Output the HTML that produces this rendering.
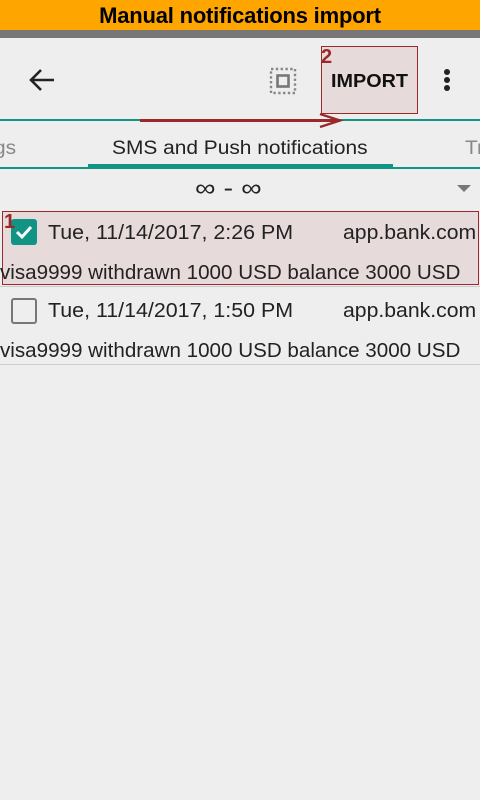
<!DOCTYPE html>
<html><head><style>
body{margin:0;width:480px;height:800px;background:#eeeeee;font-family:"Liberation Sans",sans-serif;position:relative;overflow:hidden;color:#222}
.a{position:absolute;white-space:nowrap;transform-origin:0 0}
</style></head><body>
<div class="a" style="left:0;top:0;width:480px;height:30px;background:#ffa500;text-align:center;font-weight:bold;font-size:22px;line-height:31px;color:#000;letter-spacing:-0.2px">Manual notifications import</div>
<div class="a" style="left:0;top:30px;width:480px;height:8px;background:#777"></div>
<svg class="a" style="left:28px;top:67px" width="28" height="26" viewBox="0 0 28 26"><path d="M26 13H3M13 3L3 13l10 10" stroke="#222" stroke-width="2.6" fill="none"/></svg>
<svg class="a" style="left:269px;top:67px" width="28" height="28" viewBox="0 0 28 28"><rect x="2" y="2" width="24" height="24" fill="none" stroke="#888" stroke-width="2.4" stroke-dasharray="2.4 2.4"/><rect x="8.5" y="8.5" width="11" height="11" fill="none" stroke="#777" stroke-width="2.6"/></svg>
<div class="a" style="left:321px;top:46px;width:97px;height:68px;background:#e6dada;border:1px solid #9a2a2a;box-sizing:border-box"></div>
<div class="a" style="left:321px;top:46px;font-weight:bold;font-size:20px;color:#9a2a2a">2</div>
<div class="a" style="left:331px;top:71px;font-size:18px;font-weight:bold;color:#111;transform:scaleX(1.1)">IMPORT</div>
<div class="a" style="left:444px;top:69px;width:6px;height:6px;border-radius:3px;background:#222;box-shadow:0 8px 0 #222,0 16px 0 #222"></div>
<div class="a" style="left:0;top:119px;width:480px;height:2px;background:#129484"></div>
<div class="a" style="left:140px;top:119px;width:200px;height:3px;background:#9a2a2a"></div>
<svg class="a" style="left:318px;top:112px" width="26" height="18"><path d="M2 2L22 8.5L2 15" fill="none" stroke="#9a2a2a" stroke-width="2.4"/></svg>
<div class="a" style="left:-6px;top:138px;font-size:19px;color:#888;transform:scaleX(1.1)">gs</div>
<div class="a" style="left:112px;top:138px;font-size:19px;color:#222;transform:scaleX(1.1)">SMS and Push notifications</div>
<div class="a" style="left:465px;top:138px;font-size:19px;color:#888;transform:scaleX(1.1)">Tr</div>
<div class="a" style="left:88px;top:164px;width:305px;height:4px;background:#129484"></div>
<div class="a" style="left:0;top:167px;width:480px;height:2px;background:#129484"></div>
<div class="a" style="left:195px;top:175px;font-size:24px;color:#222;transform:scaleX(1.2)">∞ - ∞</div>
<svg class="a" style="left:457px;top:185px" width="14" height="8"><path d="M0 0H14L7 7z" fill="#777"/></svg>
<div class="a" style="left:2px;top:211px;width:477px;height:74px;background:#e6dada;border:1px solid #9a2a2a;box-sizing:border-box"></div>
<div class="a" style="left:11px;top:219px;width:26px;height:26px;border-radius:3px;background:#129484"></div>
<svg class="a" style="left:11px;top:219px" width="26" height="26"><path d="M6 13l5 5 9-10" stroke="#fff" stroke-width="3" fill="none"/></svg>
<div class="a" style="left:4px;top:211px;font-weight:bold;font-size:20px;color:#9a2a2a">1</div>
<div class="a" style="left:48px;top:222px;font-size:20px;transform:scaleX(1.07)">Tue, 11/14/2017, 2:26 PM</div>
<div class="a" style="left:343px;top:222px;font-size:20px;transform:scaleX(1.06)">app.bank.com</div>
<div class="a" style="left:0;top:262px;font-size:20px;transform:scaleX(1.03)">visa9999 withdrawn 1000 USD balance 3000 USD</div>
<div class="a" style="left:0;top:286px;width:480px;height:1px;background:#ccc"></div>
<div class="a" style="left:11px;top:298px;width:26px;height:26px;border-radius:3px;border:2.5px solid #777;box-sizing:border-box"></div>
<div class="a" style="left:48px;top:300px;font-size:20px;transform:scaleX(1.07)">Tue, 11/14/2017, 1:50 PM</div>
<div class="a" style="left:343px;top:300px;font-size:20px;transform:scaleX(1.06)">app.bank.com</div>
<div class="a" style="left:0;top:340px;font-size:20px;transform:scaleX(1.03)">visa9999 withdrawn 1000 USD balance 3000 USD</div>
<div class="a" style="left:0;top:364px;width:480px;height:1px;background:#ccc"></div>
</body></html>
